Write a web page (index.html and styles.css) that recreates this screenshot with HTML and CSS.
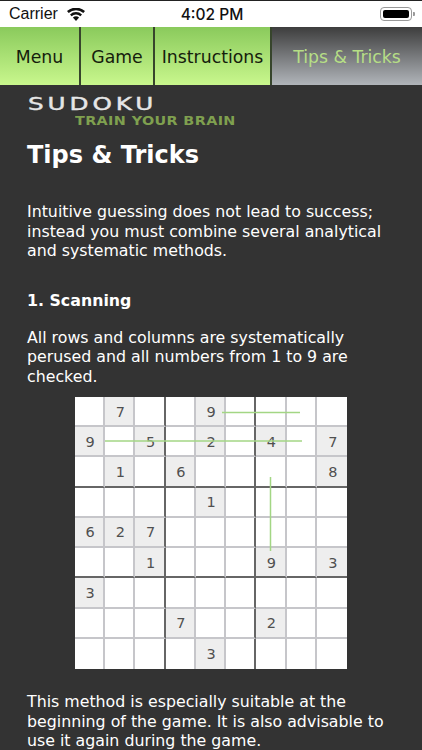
FILE: index.html
```html
<!DOCTYPE html>
<html lang="en">
<head>
<meta charset="utf-8">
<title>Sudoku - Tips &amp; Tricks</title>
<link rel="stylesheet" href="styles.css">
</head>
<body>
<header class="status">
  <div class="status-left">
    <span>Carrier</span>
    <svg class="wifi" viewBox="0 0 18 13" width="18" height="13"><path d="M9 13 5.9 9.6a4.6 4.6 0 0 1 6.2 0Z"/><path d="M4.6 8.2 3 6.4a9 9 0 0 1 12 0l-1.600 1.800a6.700 6.700 0 0 0-8.800 0Z"/><path d="M1.700 5 0 3.100a13.400 13.400 0 0 1 18 0L16.300 5a11 11 0 0 0-14.600 0Z"/></svg>
  </div>
  <div class="status-time">4:02 PM</div>
  <div class="status-right">
    <span class="battery"><span class="battery-fill"></span></span><span class="battery-tip"></span>
  </div>
</header>
<nav class="tabs">
  <a class="tab tab-menu">Menu</a>
  <a class="tab tab-game">Game</a>
  <a class="tab tab-ins">Instructions</a>
  <a class="tab tab-tips active">Tips &amp; Tricks</a>
</nav>
<main class="content">
  <div class="logo">
    <div class="logo-main">SUDOKU</div>
    <div class="logo-sub">TRAIN YOUR BRAIN</div>
  </div>
  <h1>Tips &amp; Tricks</h1>
  <p class="intro">Intuitive guessing does not lead to success; instead you must combine several analytical and systematic methods.</p>
  <h2>1. Scanning</h2>
  <p class="scan">All rows and columns are systematically perused and all numbers from 1 to 9 are checked.</p>
  <div class="board">
    <div class="grid">
      <div class="c"></div><div class="c f">7</div><div class="c r"></div><div class="c"></div><div class="c f">9</div><div class="c r"></div><div class="c"></div><div class="c"></div><div class="c e"></div>
      <div class="c f">9</div><div class="c"></div><div class="c f r">5</div><div class="c"></div><div class="c f">2</div><div class="c r"></div><div class="c f">4</div><div class="c"></div><div class="c f e">7</div>
      <div class="c b"></div><div class="c f b">1</div><div class="c b r"></div><div class="c f b">6</div><div class="c b"></div><div class="c b r"></div><div class="c b"></div><div class="c b"></div><div class="c f b e">8</div>
      <div class="c"></div><div class="c"></div><div class="c r"></div><div class="c"></div><div class="c f">1</div><div class="c r"></div><div class="c"></div><div class="c"></div><div class="c e"></div>
      <div class="c f">6</div><div class="c f">2</div><div class="c f r">7</div><div class="c"></div><div class="c"></div><div class="c r"></div><div class="c"></div><div class="c"></div><div class="c e"></div>
      <div class="c b"></div><div class="c b"></div><div class="c f b r">1</div><div class="c b"></div><div class="c b"></div><div class="c b r"></div><div class="c f b">9</div><div class="c b"></div><div class="c f b e">3</div>
      <div class="c f">3</div><div class="c"></div><div class="c r"></div><div class="c"></div><div class="c"></div><div class="c r"></div><div class="c"></div><div class="c"></div><div class="c e"></div>
      <div class="c"></div><div class="c"></div><div class="c r"></div><div class="c f">7</div><div class="c"></div><div class="c r"></div><div class="c f">2</div><div class="c"></div><div class="c e"></div>
      <div class="c l"></div><div class="c l"></div><div class="c l r"></div><div class="c l"></div><div class="c f l">3</div><div class="c l r"></div><div class="c l"></div><div class="c l"></div><div class="c l e"></div>
    </div>
    <svg class="marks" viewBox="0 0 272 272" width="272" height="272">
      <line x1="147" y1="15.500" x2="225" y2="15.500"/>
      <line x1="30" y1="44" x2="227" y2="44"/>
      <line x1="195.500" y1="80" x2="195.500" y2="154"/>
    </svg>
  </div>
  <p class="outro">This method is especially suitable at the beginning of the game. It is also advisable to use it again during the game.</p>
</main>
</body>
</html>
```
FILE: styles.css
```css
* { box-sizing: border-box; }
html, body { margin: 0; padding: 0; height: 750px; overflow: hidden; }
body { background: #333; font-family: "DejaVu Sans", sans-serif; color: #fff; }

.status {
  height: 27px;
  background: #fff;
  border-top: 1px solid #222;
  color: #111;
  font-family: "Liberation Sans", sans-serif;
  display: grid;
  grid-template-columns: 1fr auto 1fr;
  align-items: center;
  padding: 0 7px 0 9px;
}
.status-left { display: flex; align-items: center; gap: 9px; font-size: 16px; }
.wifi { fill: #111; }
.status-time { font-family: Inter, sans-serif; font-size: 15.500px; font-weight: 500; color: #111; }
.status-right { display: flex; justify-content: flex-end; align-items: center; }
.battery { width: 32px; height: 14px; border: 1px solid #999; border-radius: 4px; padding: 2px; display: flex; }
.battery-fill { flex: 1; background: #000; border-radius: 2px; }
.battery-tip { width: 2px; height: 4px; background: #999; margin-left: 1px; border-radius: 0 1px 1px 0; }

.tabs { display: flex; height: 58px; }
.tab {
  display: flex; align-items: center; justify-content: center;
  padding-top: 2px;
  font-size: 17.300px; color: #15200c;
  background: linear-gradient(#8aca5c, #c9f78d);
  border-right: 2px solid #37452c;
}
.tab-menu { width: 81px; }
.tab-game { width: 74px; }
.tab-ins { width: 117px; }
.tab-tips { flex: 1; }
.tab.active {
  background: linear-gradient(#3d3d3d, #b1b5ba);
  color: #b6de86;
  border-right: 0;
}

.content { padding: 0 27px; }
.logo { height: 41px; padding-top: 12px; margin-left: 1px; }
.logo-main {
  width: fit-content;
  font-size: 17px; line-height: 15px; font-weight: 400;
  letter-spacing: 2.700px; color: #e6e6e6;
  -webkit-text-stroke: .4px #e6e6e6;
  transform: scaleX(1.45); transform-origin: left center;
}
.logo-sub {
  width: fit-content;
  font-size: 11.500px; line-height: 10px; font-weight: 700;
  letter-spacing: .3px; color: #7fa04f;
  margin: 4px 0 0 47px; white-space: nowrap;
  transform: scaleX(1.25); transform-origin: left center;
}

h1 { margin: 13px 0 0; font-size: 24px; line-height: 32px; font-weight: 700; }
p { margin: 0; font-size: 15.800px; line-height: 19.500px; }
.intro { margin-top: 31px; }
h2 { margin: 30px 0 0; font-size: 15.800px; line-height: 20px; font-weight: 700; }
.scan { margin-top: 17px; }

.board { position: relative; width: 272px; height: 272px; margin: 11px 0 0 48px; }
.grid {
  display: grid;
  grid-template-columns: repeat(9, 1fr);
  grid-template-rows: repeat(9, 1fr);
  width: 272px; height: 272px;
  background: #fff;
}
.c {
  display: flex; align-items: center; justify-content: center;
  padding: 1px 0 0 2px;
  font-size: 14.500px; color: #505050;
  border-right: 2px solid #c6c6ca;
  border-bottom: 2px solid #c6c6ca;
}
.f { background: #eee; }
.r { border-right-color: #666; }
.b { border-bottom-color: #666; }
.e { border-right: 0; }
.l { border-bottom: 0; }
.marks { position: absolute; left: 0; top: 0; }
.marks line { stroke: #a3d684; stroke-width: 1.500; }

.outro { margin-top: 23px; }
```
